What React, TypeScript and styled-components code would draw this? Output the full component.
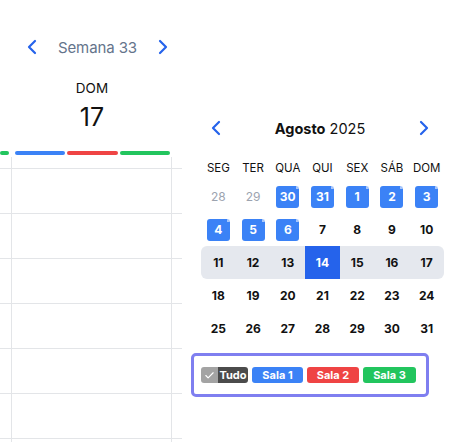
import React from "react";
import styled, { createGlobalStyle } from "styled-components";
import { ChevronLeft, ChevronRight, Check } from "lucide-react";

const GlobalStyle = createGlobalStyle`
  * { box-sizing: border-box; }
  body {
    margin: 0;
    background: #ffffff;
    font-family: Inter, "Liberation Sans", Arial, sans-serif;
    color: #111111;
  }
`;

type Day = { n: number; muted?: boolean; booked?: boolean; today?: boolean };

const weeks: { days: Day[]; current?: boolean }[] = [
  {
    days: [
      { n: 28, muted: true },
      { n: 29, muted: true },
      { n: 30, booked: true },
      { n: 31, booked: true },
      { n: 1, booked: true },
      { n: 2, booked: true },
      { n: 3, booked: true },
    ],
  },
  {
    days: [
      { n: 4, booked: true },
      { n: 5, booked: true },
      { n: 6, booked: true },
      { n: 7 },
      { n: 8 },
      { n: 9 },
      { n: 10 },
    ],
  },
  {
    current: true,
    days: [
      { n: 11 },
      { n: 12 },
      { n: 13 },
      { n: 14, today: true },
      { n: 15 },
      { n: 16 },
      { n: 17 },
    ],
  },
  { days: [18, 19, 20, 21, 22, 23, 24].map((n) => ({ n })) },
  { days: [25, 26, 27, 28, 29, 30, 31].map((n) => ({ n })) },
];

const weekdays = ["SEG", "TER", "QUA", "QUI", "SEX", "SÁB", "DOM"];

const rooms = [
  { label: "Sala 1", color: "#3b82f6", width: 51 },
  { label: "Sala 2", color: "#ef4444", width: 52 },
  { label: "Sala 3", color: "#22c55e", width: 53 },
];

const App: React.FC = () => {
  return (
    <Page>
      <GlobalStyle />
      <WeekPane>
        <WeekNav>
          <NavButton>
            <ChevronLeft size={24} strokeWidth={2.2} />
          </NavButton>
          <WeekLabel>Semana 33</WeekLabel>
          <NavButton>
            <ChevronRight size={24} strokeWidth={2.2} />
          </NavButton>
        </WeekNav>
        <DayHead>
          <DayName>DOM</DayName>
          <DayNumber>17</DayNumber>
        </DayHead>
        <BarsRow>
          <PrevColumnBars>
            <Bar $color="#22c55e" />
          </PrevColumnBars>
          <ColumnBars>
            <Bar $color="#3b82f6" />
            <Bar $color="#ef4444" />
            <Bar $color="#22c55e" />
          </ColumnBars>
        </BarsRow>
        <SlotGrid>
          <DayColumn />
          <SlotLine $first />
          {Array.from({ length: 6 }).map((_, i) => (
            <SlotLine key={i} />
          ))}
        </SlotGrid>
      </WeekPane>

      <CalendarPane>
        <MonthHeader>
          <NavButton>
            <ChevronLeft size={24} strokeWidth={2.2} />
          </NavButton>
          <MonthTitle>
            <strong>Agosto</strong> 2025
          </MonthTitle>
          <NavButton>
            <ChevronRight size={24} strokeWidth={2.2} />
          </NavButton>
        </MonthHeader>

        <WeekdayRow>
          {weekdays.map((w) => (
            <Weekday key={w}>{w}</Weekday>
          ))}
        </WeekdayRow>

        {weeks.map((week, i) => (
          <WeekRow key={i} $current={week.current}>
            {week.days.map((d, j) => (
              <DayCell key={j} $today={d.today}>
                <DayMark $muted={d.muted} $booked={d.booked}>
                  {d.n}
                </DayMark>
              </DayCell>
            ))}
          </WeekRow>
        ))}

        <FilterBox>
          <AllChip>
            <AllCheck>
              <Check size={11} strokeWidth={2.5} />
            </AllCheck>
            <AllLabel>Tudo</AllLabel>
          </AllChip>
          {rooms.map((r) => (
            <RoomChip key={r.label} $color={r.color} $width={r.width}>
              {r.label}
            </RoomChip>
          ))}
        </FilterBox>
      </CalendarPane>
    </Page>
  );
};

export default App;

const Page = styled.div`
  display: flex;
  width: 454px;
  height: 442px;
  overflow: hidden;
  background: #ffffff;
`;

const WeekPane = styled.div`
  width: 182px;
  flex-shrink: 0;
  display: flex;
  flex-direction: column;
`;

const WeekNav = styled.div`
  display: flex;
  align-items: center;
  justify-content: space-between;
  height: 32px;
  margin-top: 31px;
  padding: 0 7px 0 20px;
  width: 182px;
`;

const NavButton = styled.button`
  display: flex;
  align-items: center;
  justify-content: center;
  width: 24px;
  height: 24px;
  padding: 0;
  border: none;
  background: none;
  color: #2563eb;
  cursor: pointer;
`;

const WeekLabel = styled.span`
  font-size: 15px;
  color: #64748b;
  letter-spacing: -0.1px;
`;

const DayHead = styled.div`
  display: flex;
  flex-direction: column;
  align-items: center;
  width: 182px;
  padding-left: 2px;
  margin-top: 16px;
`;

const DayName = styled.div`
  font-size: 13.5px;
  line-height: 18px;
  color: #111111;
`;

const DayNumber = styled.div`
  font-size: 25px;
  line-height: 30px;
  margin-top: 5px;
  color: #111111;
`;

const BarsRow = styled.div`
  display: flex;
  margin-top: 19px;
  height: 4px;
`;

const PrevColumnBars = styled.div`
  width: 11px;
  padding-right: 2px;
  display: flex;
`;

const ColumnBars = styled.div`
  width: 160px;
  display: flex;
  gap: 2px;
  padding: 0 1px 0 4px;
`;

const Bar = styled.div<{ $color: string }>`
  flex: 1;
  height: 4px;
  border-radius: 2px;
  background: ${(p) => p.$color};
`;

const SlotGrid = styled.div`
  position: relative;
  flex: 1;
  margin-top: 2px;
`;

const DayColumn = styled.div`
  position: absolute;
  top: 0;
  bottom: 0;
  left: 11px;
  width: 161px;
  border-left: 1px solid #e3e5e8;
  border-right: 1px solid #e3e5e8;
`;

const SlotLine = styled.div<{ $first?: boolean }>`
  height: ${(p) => (p.$first ? "12px" : "45px")};
  border-bottom: 1px solid #e3e5e8;
`;

const CalendarPane = styled.div`
  flex: 1;
  display: flex;
  flex-direction: column;
  padding: 0 10px 0 19px;
  background: #ffffff;
`;

const MonthHeader = styled.div`
  display: flex;
  align-items: center;
  justify-content: space-between;
  margin-top: 116px;
  height: 24px;
  padding: 0 8px 0 3px;
`;

const MonthTitle = styled.div`
  font-size: 14.5px;
  color: #111111;
  strong {
    font-weight: 700;
  }
`;

const WeekdayRow = styled.div`
  display: grid;
  grid-template-columns: repeat(7, 1fr);
  margin-top: 10px;
  height: 30px;
  align-items: end;
  padding-bottom: 5px;
`;

const Weekday = styled.div`
  text-align: center;
  font-size: 11.5px;
  color: #111111;
  line-height: 14px;
`;

const WeekRow = styled.div<{ $current?: boolean }>`
  display: grid;
  grid-template-columns: repeat(7, 1fr);
  height: 33px;
  border-radius: 6px;
  overflow: hidden;
  background: ${(p) => (p.$current ? "#e5e8ee" : "transparent")};
`;

const DayCell = styled.div<{ $today?: boolean }>`
  display: flex;
  align-items: center;
  justify-content: center;
  background: ${(p) => (p.$today ? "#2563eb" : "transparent")};
  color: ${(p) => (p.$today ? "#ffffff" : "#111111")};
`;

const DayMark = styled.div<{ $muted?: boolean; $booked?: boolean }>`
  position: relative;
  width: 23px;
  height: 22px;
  display: flex;
  align-items: center;
  justify-content: center;
  border-radius: 3px;
  font-size: 12px;
  font-weight: ${(p) => (p.$muted ? 400 : 700)};
  color: ${(p) => (p.$muted ? "#9ca3af" : p.$booked ? "#ffffff" : "inherit")};
  background: ${(p) => (p.$booked ? "#3b82f6" : "transparent")};

  &::after {
    content: "";
    display: ${(p) => (p.$booked ? "block" : "none")};
    position: absolute;
    top: 0;
    right: 0;
    width: 0;
    height: 0;
    border-top: 3px solid #eef4fe;
    border-left: 3px solid #a9c7fb;
    border-top-right-radius: 3px;
  }
`;

const FilterBox = styled.div`
  display: flex;
  align-items: center;
  gap: 4px;
  width: 238px;
  height: 44px;
  margin: 8px 0 0 -10px;
  padding: 0 7px;
  border: 3px solid #7f7ff0;
  border-radius: 5px;
`;

const AllChip = styled.div`
  display: flex;
  height: 16px;
  width: 47px;
  border-radius: 3px;
  overflow: hidden;
`;

const AllCheck = styled.div`
  width: 17px;
  display: flex;
  align-items: center;
  justify-content: center;
  background: #a3a3a3;
  color: #ffffff;
`;

const AllLabel = styled.div`
  flex: 1;
  display: flex;
  align-items: center;
  justify-content: center;
  background: #4b4b4b;
  color: #ffffff;
  font-size: 11px;
  font-weight: 700;
`;

const RoomChip = styled.div<{ $color: string; $width: number }>`
  width: ${(p) => p.$width}px;
  height: 16px;
  display: flex;
  align-items: center;
  justify-content: center;
  border-radius: 3px;
  background: ${(p) => p.$color};
  color: #ffffff;
  font-size: 11px;
  font-weight: 700;
`;
